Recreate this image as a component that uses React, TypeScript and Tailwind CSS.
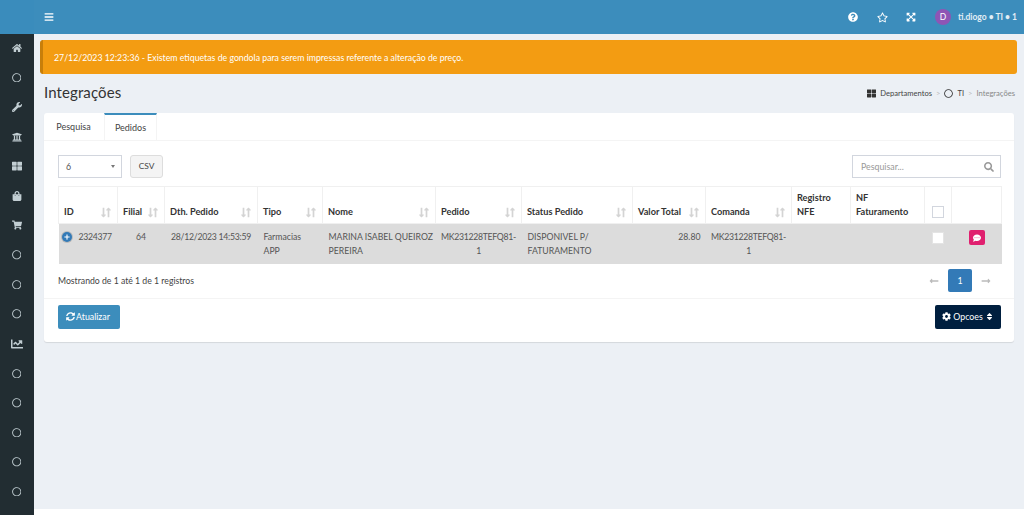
import React from "react"
import {
    FaBars, FaChartLine, FaCog, FaCommentDots, FaExpandArrowsAlt, FaHome, FaLongArrowAltLeft, FaLongArrowAltRight,
    FaPlus, FaQuestionCircle, FaRegCircle, FaRegStar, FaSearch, FaShoppingBag, FaShoppingCart, FaSort, FaSyncAlt,
    FaThLarge, FaUniversity, FaWrench, FaLongArrowAltDown, FaLongArrowAltUp,
} from "react-icons/fa"

const menu = [
    FaHome, FaRegCircle, FaWrench, FaUniversity, FaThLarge, FaShoppingBag, FaShoppingCart,
    FaRegCircle, FaRegCircle, FaRegCircle, FaChartLine, FaRegCircle, FaRegCircle, FaRegCircle, FaRegCircle, FaRegCircle,
]

const columns = [
    {label: "ID", width: "w-[59px]", sort: true},
    {label: "Filial", width: "w-[47px]", sort: true},
    {label: "Dth. Pedido", width: "w-[93px]", sort: true},
    {label: "Tipo", width: "w-[65px]", sort: true},
    {label: "Nome", width: "w-[113px]", sort: true},
    {label: "Pedido", width: "w-[86px]", sort: true},
    {label: "Status Pedido", width: "w-[111px]", sort: true},
    {label: "Valor Total", width: "w-[73px]", sort: true},
    {label: "Comanda", width: "w-[86px]", sort: true},
    {label: "Registro\nNFE", width: "w-[59px]", sort: false},
    {label: "NF\nFaturamento", width: "w-[74px]", sort: false},
]

const SortIcon = () => (
    <span className="absolute right-[3px] bottom-[5px] flex text-[#d4d4d4] text-[11px]">
        <FaLongArrowAltDown className="-mr-[6px]" />
        <FaLongArrowAltUp />
    </span>
)

const App = () => {
    return (
        <div className="flex h-[515px] w-[1024px] overflow-hidden bg-[#ecf0f5] text-[8.8px] text-[#444] font-['Lato','Noto_Sans',sans-serif]">
            <aside className="flex w-[34px] shrink-0 flex-col bg-[#222d32]">
                <div className="h-[34px] bg-[#3a8cbc]"></div>
                <nav className="-mt-[1px] flex flex-col items-center pr-[1px] text-[#c2ced3]">
                    {menu.map((Icon, i) => (
                        <div key={i} className="flex h-[29.6px] items-center justify-center">
                            <Icon className={Icon === FaRegCircle ? "text-[9.5px]" : Icon === FaChartLine ? "text-[12px]" : "text-[10px]"} />
                        </div>
                    ))}
                </nav>
            </aside>
            <div className="flex min-w-0 flex-1 flex-col">
                <header className="flex h-[34px] shrink-0 items-center bg-[#3c8dbc] pl-[10px] pr-[10px] text-white">
                    <FaBars className="text-[10px]" />
                    <div className="ml-auto flex items-center">
                        <FaQuestionCircle className="text-[10px]" />
                        <FaRegStar className="ml-[19px] text-[11px]" />
                        <FaExpandArrowsAlt className="ml-[18px] text-[10px]" />
                        <span className="ml-[19px] flex size-[16px] items-center justify-center rounded-full bg-[#8e55b5] text-[8.5px]">D</span>
                        <span className="ml-[7px] w-[56px] whitespace-nowrap text-[8.5px] font-bold text-[#e2eef5]">ti.diogo • TI • 1</span>
                    </div>
                </header>
                <main className="flex-1 px-[6px] pt-[6px]">
                    <div className="flex h-[34px] w-[977px] items-center rounded-[3px] border-l-[3px] border-[#c87f0a] bg-[#f39c12] pl-[11px] pt-[1px] text-[8.75px] text-white">
                        27/12/2023 12:23:36 - Existem etiquetas de gondola para serem impressas referente a alteração de preço.
                    </div>
                    <div className="ml-[4px] mr-[3px] mt-[8px] flex h-[21px] items-center justify-between">
                        <h1 className="text-[15px] leading-none tracking-[0.1px] text-[#333]">Integrações</h1>
                        <div className="flex items-center pt-[2px] text-[7.6px] text-[#444]">
                            <FaThLarge className="mr-[4px] text-[9px] text-[#333]" />
                            <span>Departamentos</span>
                            <span className="mx-[4px] text-[#bbb]">&gt;</span>
                            <FaRegCircle className="mr-[4px] text-[9px] text-[#333]" />
                            <span>TI</span>
                            <span className="mx-[4px] text-[#bbb]">&gt;</span>
                            <span className="text-[#888]">Integrações</span>
                        </div>
                    </div>
                    <section className="ml-[4px] mt-[10px] h-[229px] w-[970px] rounded-[3px] bg-white shadow-[0_1px_1px_rgba(0,0,0,0.1)]">
                        <div className="flex h-[28px] border-b border-[#f4f4f4] text-[9px] text-[#444]">
                            <div className="flex w-[60px] items-center justify-center pr-[1px]">Pesquisa</div>
                            <div className="flex w-[53px] items-center justify-center border-x border-t-2 border-x-[#f4f4f4] border-t-[#3c8dbc] bg-white">Pedidos</div>
                        </div>
                        <div className="pl-[14px] pr-[13px] pt-[14px]">
                            <div className="flex items-center">
                                <div className="flex h-[23px] w-[64px] items-center justify-between border border-[#d2d6de] pl-[7px] pr-[6px] text-[8.8px] text-[#555]">
                                    6
                                    <span className="border-x-[2.5px] border-t-[3px] border-x-transparent border-t-[#777]"></span>
                                </div>
                                <div className="ml-[8px] flex h-[23px] w-[33px] items-center justify-center rounded-[3px] border border-[#ddd] bg-[#f4f4f4] text-[8.4px] text-[#444]">CSV</div>
                                <div className="ml-auto flex h-[23px] w-[149px] items-center justify-between border border-[#d2d6de] pl-[8px] pr-[6px] text-[8.8px] text-[#999]">
                                    Pesquisar...
                                    <FaSearch className="text-[10px] text-[#999]" />
                                </div>
                            </div>
                            <table className="mt-[8px] w-[943px] table-fixed border-collapse">
                                <thead>
                                    <tr className="h-[37px]">
                                        {columns.map((col) => (
                                            <th key={col.label} className={`${col.width} relative whitespace-pre-line border border-[#f0f0f0] px-[5px] pb-[5px] align-bottom text-left text-[9.2px] font-bold leading-[13.5px] text-[#333]`}>
                                                {col.label}
                                                {col.sort && <SortIcon />}
                                            </th>
                                        ))}
                                        <th className="w-[27px] border border-[#f0f0f0] pb-[5px] align-bottom">
                                            <span className="mx-auto block size-[12px] border border-[#d2d6de] bg-white"></span>
                                        </th>
                                        <th className="w-[50px] border border-[#f0f0f0]"></th>
                                    </tr>
                                </thead>
                                <tbody>
                                    <tr className="h-[40px] bg-[#dcdcdc] text-[8.7px] leading-[13.5px] text-[#555]">
                                        <td className="px-[3px] pt-[6px] align-top">
                                            <div className="flex items-center tracking-[-0.3px]">
                                                <span className="mr-[7px] flex size-[10px] items-center justify-center rounded-full bg-[#337ab7] text-[6px] text-white shadow-[0_0_0_1px_#bbb]"><FaPlus /></span>
                                                2324377
                                            </div>
                                        </td>
                                        <td className="pt-[6px] text-center align-top">64</td>
                                        <td className="pt-[6px] text-center align-top tracking-[-0.25px]">28/12/2023 14:53:59</td>
                                        <td className="px-[6px] pt-[6px] align-top">Farmacias APP</td>
                                        <td className="pl-[6px] pt-[6px] align-top">MARINA ISABEL QUEIROZ PEREIRA</td>
                                        <td className="px-[4px] pt-[6px] text-center align-top tracking-[-0.3px]">MK231228TEFQ81-1</td>
                                        <td className="px-[6px] pt-[6px] align-top">DISPONIVEL P/ FATURAMENTO</td>
                                        <td className="px-[5px] pt-[6px] text-right align-top">28.80</td>
                                        <td className="px-[4px] pt-[6px] text-center align-top tracking-[-0.3px]">MK231228TEFQ81-1</td>
                                        <td></td>
                                        <td></td>
                                        <td className="pt-[8px] align-top">
                                            <span className="mx-auto block size-[12px] border border-[#e4e4e4] bg-white"></span>
                                        </td>
                                        <td className="pt-[6px] align-top">
                                            <span className="ml-[17px] flex h-[15px] w-[16px] items-center justify-center rounded-[2px] bg-[#e0206f] text-[8px] text-white"><FaCommentDots /></span>
                                        </td>
                                    </tr>
                                </tbody>
                            </table>
                            <div className="mt-[5px] flex h-[24px] items-center justify-between text-[8.7px] text-[#444]">
                                <span>Mostrando de 1 até 1 de 1 registros</span>
                                <div className="flex items-center text-[#bbb]">
                                    <FaLongArrowAltLeft className="mr-[9px] text-[10px]" />
                                    <span className="flex h-[23px] w-[24px] items-center justify-center rounded-[2px] bg-[#337ab7] text-[8.8px] text-white">1</span>
                                    <FaLongArrowAltRight className="ml-[9px] mr-[10px] text-[10px]" />
                                </div>
                            </div>
                        </div>
                        <div className="mt-[5px] flex justify-between border-t border-[#f4f4f4] pl-[14px] pr-[13px] pt-[6px]">
                            <button className="flex h-[24px] w-[62px] items-center justify-center rounded-[2px] bg-[#3c8dbc] pr-[2px] text-[8.8px] text-white">
                                <FaSyncAlt className="mr-[1px] text-[9px]" />Atualizar
                            </button>
                            <button className="flex h-[24px] w-[66px] items-center justify-center rounded-[2px] bg-[#001f3f] text-[8.8px] text-white">
                                <FaCog className="mr-[2px] text-[9px]" />Opcoes<FaSort className="ml-[2px] text-[9px]" />
                            </button>
                        </div>
                    </section>
                </main>
                <footer className="h-[6px] shrink-0 bg-white"></footer>
            </div>
        </div>
    )
}

export default App;
